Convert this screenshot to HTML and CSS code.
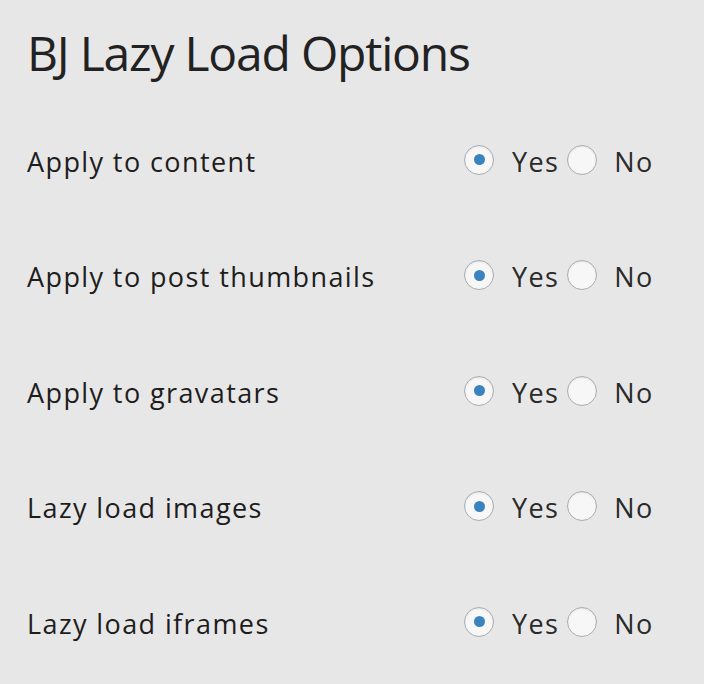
FILE: index.html
```html
<!DOCTYPE html>
<html>
<head>
<meta charset="utf-8">
<link rel="stylesheet" href="styles.css">
</head>
<body>
<div class="page">
  <h1 class="title">BJ Lazy Load Options</h1>
  <div class="rows">
    <div class="row">
      <div class="label">Apply to content</div>
      <div class="opts">
        <span class="radio checked"></span><span class="opt-text yes">Yes</span>
        <span class="radio"></span><span class="opt-text">No</span>
      </div>
    </div>
    <div class="row">
      <div class="label">Apply to post thumbnails</div>
      <div class="opts">
        <span class="radio checked"></span><span class="opt-text yes">Yes</span>
        <span class="radio"></span><span class="opt-text">No</span>
      </div>
    </div>
    <div class="row">
      <div class="label">Apply to gravatars</div>
      <div class="opts">
        <span class="radio checked"></span><span class="opt-text yes">Yes</span>
        <span class="radio"></span><span class="opt-text">No</span>
      </div>
    </div>
    <div class="row">
      <div class="label">Lazy load images</div>
      <div class="opts">
        <span class="radio checked"></span><span class="opt-text yes">Yes</span>
        <span class="radio"></span><span class="opt-text">No</span>
      </div>
    </div>
    <div class="row">
      <div class="label">Lazy load iframes</div>
      <div class="opts">
        <span class="radio checked"></span><span class="opt-text yes">Yes</span>
        <span class="radio"></span><span class="opt-text">No</span>
      </div>
    </div>
  </div>
</div>
</body>
</html>
```
FILE: styles.css
```css
html, body {
  margin: 0;
  padding: 0;
  background: #e8e7e7;
}
.page {
  width: 704px;
  height: 684px;
  padding: 0 0 0 27px;
  box-sizing: border-box;
  font-family: "Open Sans", "Noto Sans", sans-serif;
  color: #1d1d1d;
}
.title {
  margin: 0;
  padding-top: 23px;
  font-size: 48px;
  font-weight: 400;
  letter-spacing: -1.2px;
  line-height: 60px;
  color: #222;
}
.rows {
  display: flex;
  flex-direction: column;
  margin-top: 21px;
}
.row {
  display: flex;
  align-items: center;
  height: 115.5px;
}
.label {
  width: 437px;
  font-size: 27px;
  letter-spacing: 1.4px;
  line-height: 40px;
}
.opts {
  display: flex;
  align-items: center;
  font-size: 27px;
  letter-spacing: 1.4px;
  line-height: 40px;
}
.radio {
  width: 30px;
  height: 30px;
  box-sizing: border-box;
  border-radius: 50%;
  border: 1px solid #a9acae;
  background: #f7f7f7;
  box-shadow: inset 0 1px 2px rgba(0,0,0,0.08);
  display: flex;
  align-items: center;
  justify-content: center;
  margin-top: -4px;
}
.radio.checked::after {
  content: "";
  width: 11px;
  height: 11px;
  border-radius: 50%;
  background: #3a83bf;
}
.opt-text {
  margin-left: 17px;
  color: #2a2a2a;
}
.opt-text.yes {
  margin-left: 18px;
  margin-right: 8px;
}
```
